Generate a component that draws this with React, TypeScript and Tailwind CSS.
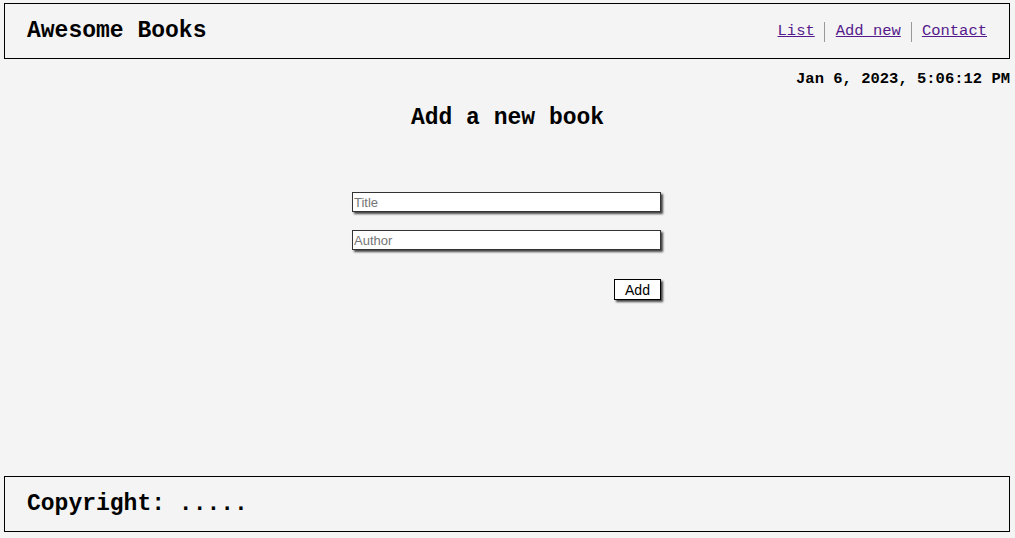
import React from 'react';

const mono = { fontFamily: '"Liberation Mono", "Courier New", monospace' };

const App: React.FC = () => {
  return (
    <div className="flex h-screen flex-col bg-[#f4f4f4] text-black" style={mono}>
      <header className="mx-[4px] mr-[5px] mt-[3px] flex h-[56px] items-center justify-between border border-black px-[22px]">
        <h1 className="text-[23px] font-bold">Awesome Books</h1>
        <nav className="mt-[2px] flex items-center text-[15.5px] text-[#551a8b]">
          <a href="#list" className="underline">List</a>
          <span className="ml-[9px] mr-[11px] h-[20px] w-px bg-[#999]" />
          <a href="#add" className="underline">Add new</a>
          <span className="ml-[10px] mr-[10px] h-[20px] w-px bg-[#999]" />
          <a href="#contact" className="underline">Contact</a>
        </nav>
      </header>

      <main className="flex-1">
        <p className="mt-[12px] pr-[5px] text-right text-[15.5px] font-bold leading-[17px]">Jan 6, 2023, 5:06:12 PM</p>
        <h2 className="mt-[17px] text-center text-[23px] font-bold leading-[26px]">Add a new book</h2>

        <form className="mx-auto mt-[61px] flex w-[311px] flex-col pr-[2px]" style={{ fontFamily: '"Liberation Sans", Arial, sans-serif' }}>
          <input
            type="text"
            placeholder="Title"
            className="h-[20px] w-[309px] border border-[#333] bg-white px-[1px] text-[13px] shadow-[2px_2px_2px_#444] outline-none placeholder:text-[#757575]"
          />
          <input
            type="text"
            placeholder="Author"
            className="mt-[18px] h-[20px] w-[309px] border border-[#333] bg-white px-[1px] text-[13px] shadow-[2px_2px_2px_#444] outline-none placeholder:text-[#757575]"
          />
          <div className="mt-[29px] flex justify-end">
            <button
              type="button"
              className="h-[21px] w-[47px] border border-black bg-white text-[14px] leading-none shadow-[2px_2px_2px_#444]"
            >
              Add
            </button>
          </div>
        </form>
      </main>

      <footer className="mb-[6px] ml-[4px] mr-[5px] flex h-[56px] items-center border border-black px-[22px]">
        <p className="text-[23px] font-bold">Copyright: .....</p>
      </footer>
    </div>
  );
};

export default App;
